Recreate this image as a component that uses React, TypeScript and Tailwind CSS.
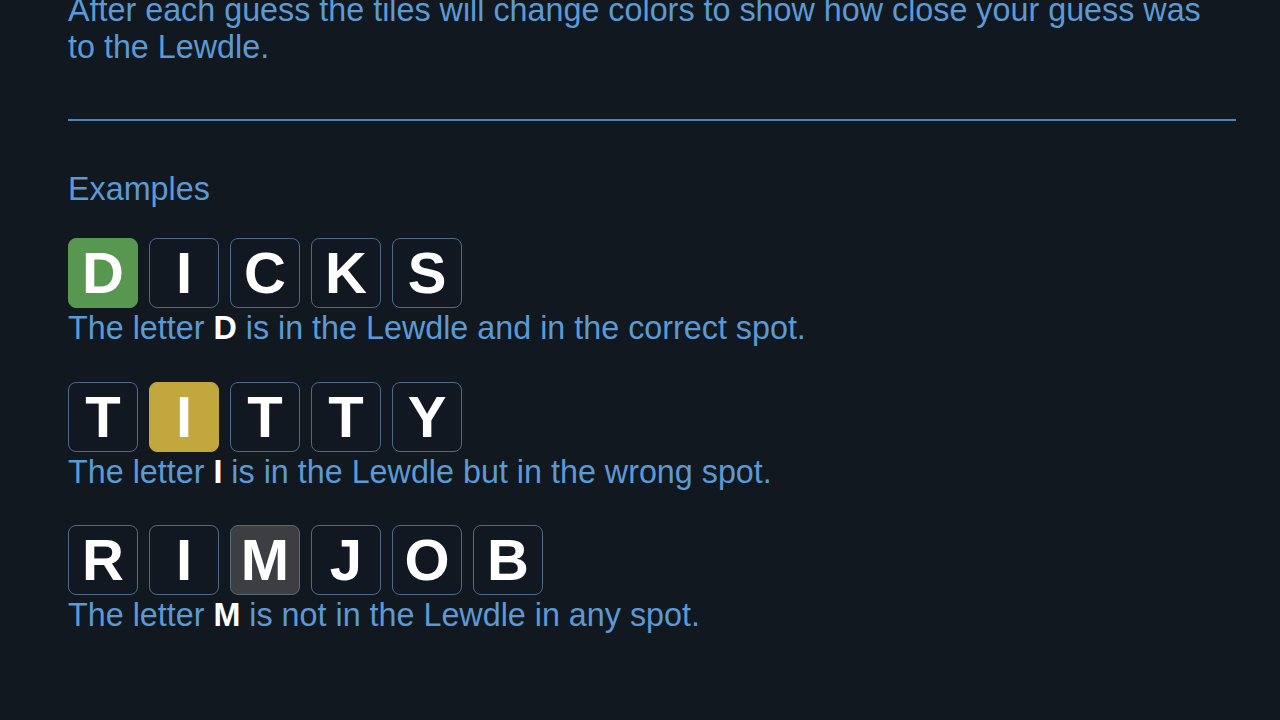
const examples = [
  { word: "DICKS", hit: 0, kind: "correct", letter: "D", rest: " is in the Lewdle and in the correct spot." },
  { word: "TITTY", hit: 1, kind: "present", letter: "I", rest: " is in the Lewdle but in the wrong spot." },
  { word: "RIMJOB", hit: 2, kind: "absent", letter: "M", rest: " is not in the Lewdle in any spot." },
]

function Tile({ ch, kind }: { ch: string; kind?: string }) {
  let color = "bg-[#121821] border-[#4f6a86]"
  if (kind === "correct") color = "bg-[#57974f] border-[#57974f]"
  if (kind === "present") color = "bg-[#c1a73c] border-[#c1a73c]"
  if (kind === "absent") color = "bg-[#3c3e41] border-[#5a6878]"
  return (
    <div className={`w-[70px] h-[70px] rounded-[8px] border-[1.5px] flex items-center justify-center text-white font-bold text-[58px] leading-none ${color}`}>
      {ch}
    </div>
  )
}

export default function App() {
  return (
    <div className="w-[1280px] h-[720px] overflow-hidden bg-[#111820] font-['Liberation_Sans',Arial,sans-serif] text-[#5b9ad4] text-[32.3px] leading-[1.15]">
      <div className="ml-[68px] w-[1168px] -mt-[8px]">
        <p className="pr-[20px]">
          After each guess the tiles will change colors to show how close your guess was to the Lewdle.
        </p>
        <div className="mt-[53px] h-[2px] bg-[#4f84b8]" />
        <p className="mt-[50px]">Examples</p>
        <div className="mt-[30px] flex flex-col gap-[34px]">
          {examples.map((ex) => (
            <div key={ex.word}>
              <div className="flex gap-[11px]">
                {ex.word.split("").map((c, i) => (
                  <Tile key={i} ch={c} kind={i === ex.hit ? ex.kind : undefined} />
                ))}
              </div>
              <p className="mt-[2px]">
                The letter <b className="text-white font-bold">{ex.letter}</b>
                {ex.rest}
              </p>
            </div>
          ))}
        </div>
      </div>
    </div>
  )
}
